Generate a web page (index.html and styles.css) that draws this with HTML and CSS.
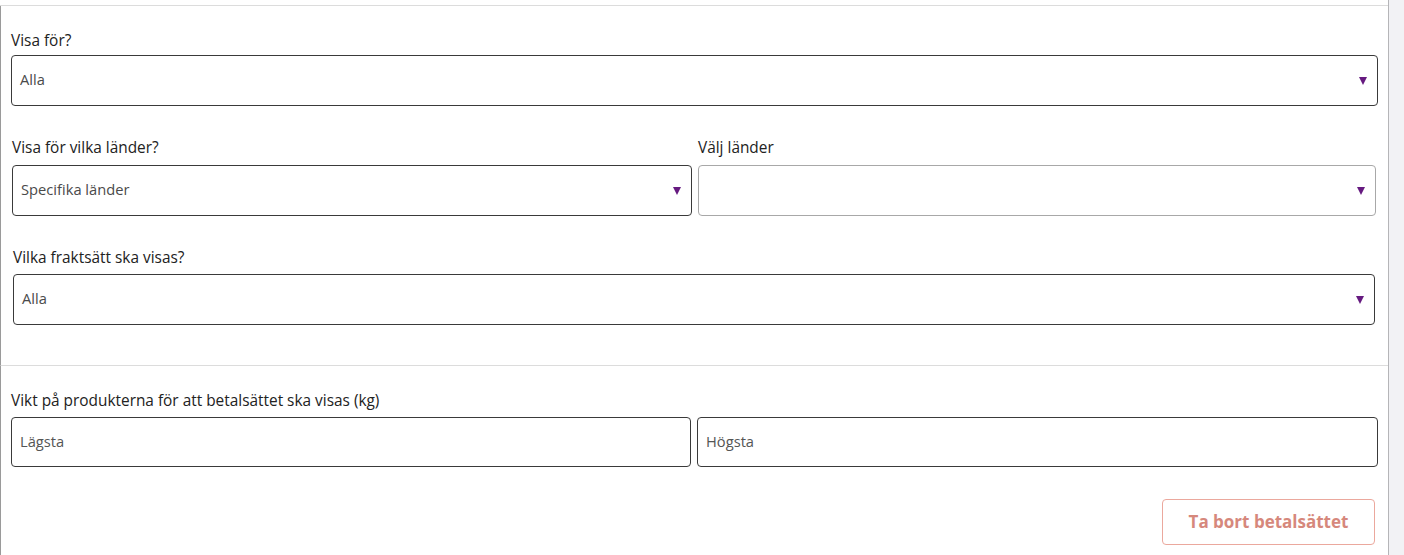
FILE: index.html
```html
<!DOCTYPE html>
<html lang="sv">
<head>
<meta charset="utf-8">
<title>Betalsätt</title>
<link rel="stylesheet" href="styles.css">
</head>
<body>
<div class="page">
  <div class="panel">
    <div class="top-gap"></div>
    <section class="section first">
      <div class="field r1">
        <label class="label">Visa för?</label>
        <div class="select"><span class="value">Alla</span><span class="caret"></span></div>
      </div>
      <div class="row r2">
        <div class="field">
          <label class="label">Visa för vilka länder?</label>
          <div class="select"><span class="value">Specifika länder</span><span class="caret"></span></div>
        </div>
        <div class="field">
          <label class="label">Välj länder</label>
          <div class="select light"><span class="value"></span><span class="caret"></span></div>
        </div>
      </div>
      <div class="field r3">
        <label class="label">Vilka fraktsätt ska visas?</label>
        <div class="select"><span class="value">Alla</span><span class="caret"></span></div>
      </div>
    </section>
    <section class="section second">
      <div class="field r4">
        <label class="label">Vikt på produkterna för att betalsättet ska visas (kg)</label>
        <div class="row pair">
          <div class="input"><span class="placeholder">Lägsta</span></div>
          <div class="input"><span class="placeholder">Högsta</span></div>
        </div>
      </div>
      <div class="actions">
        <button class="btn-remove" type="button">Ta bort betalsättet</button>
      </div>
    </section>
  </div>
  <div class="side"></div>
</div>
</body>
</html>
```

FILE: styles.css
```css
* { box-sizing: border-box; }
html, body { margin: 0; padding: 0; }
body {
  font-family: "Open Sans", "Noto Sans", sans-serif;
  color: #222;
  background: #fff;
  width: 1404px;
  height: 555px;
  overflow: hidden;
}
.page {
  display: flex;
  height: 555px;
}
.panel {
  width: 1389px;
  border-right: 1px solid #b5b5b8;
  background: #fff;
  display: flex;
  flex-direction: column;
}
.side {
  flex: 1;
  background: #f2f2f5;
}
.top-gap {
  height: 6px;
  border-bottom: 1px solid #dcdcdc;
}
.section {
  border-left: 1px solid #9a9a9a;
}
.section.first {
  padding: 25px 10px 40px 10px;
  border-bottom: 1px solid #dcdcdc;
}
.section.second {
  padding: 25px 10px 0 10px;
  flex: 1;
}
.field {
  display: flex;
  flex-direction: column;
}
.label {
  font-size: 15.4px;
  line-height: 20px;
  color: #222;
  margin-bottom: 4px;
}
.r2 { margin-top: 32px; padding-left: 1px; padding-right: 2px; }
.r2 .label { margin-bottom: 7px; }
.r3 { margin-top: 32px; padding-left: 2px; padding-right: 3px; }
.r3 .label { margin-bottom: 6px; }
.r4 .label { margin-bottom: 6px; }
.row {
  display: grid;
  grid-template-columns: 1fr 1fr;
  column-gap: 6px;
}
.r2.row { grid-template-columns: 680px 1fr; }
.pair { grid-template-columns: 680px 1fr; }
.select, .input {
  height: 51px;
  border: 1px solid #3a3a3a;
  border-radius: 4px;
  display: flex;
  align-items: center;
  padding: 0 10px 3px 8px;
  background: #fff;
}
.input { height: 50px; }
.select.light { border-color: #a8a8a8; }
.value, .placeholder {
  flex: 1;
  font-size: 14.7px;
  line-height: 20px;
  color: #4a4a4a;
}
.placeholder { color: #555; }
.caret {
  width: 0;
  height: 0;
  border-left: 4.5px solid transparent;
  border-right: 4.5px solid transparent;
  border-top: 8px solid #661a80;
  margin-top: 4px;
}
.actions {
  display: flex;
  justify-content: flex-end;
  margin-top: 32px;
  padding-right: 3px;
}
.btn-remove {
  width: 213px;
  height: 46px;
  background: #fff;
  border: 1px solid #eba89d;
  border-radius: 4px;
  color: #d6887c;
  font-family: "Open Sans", "Noto Sans", sans-serif;
  font-weight: 700;
  font-size: 17px;
  padding: 0 0 2px;
  cursor: pointer;
}
```
